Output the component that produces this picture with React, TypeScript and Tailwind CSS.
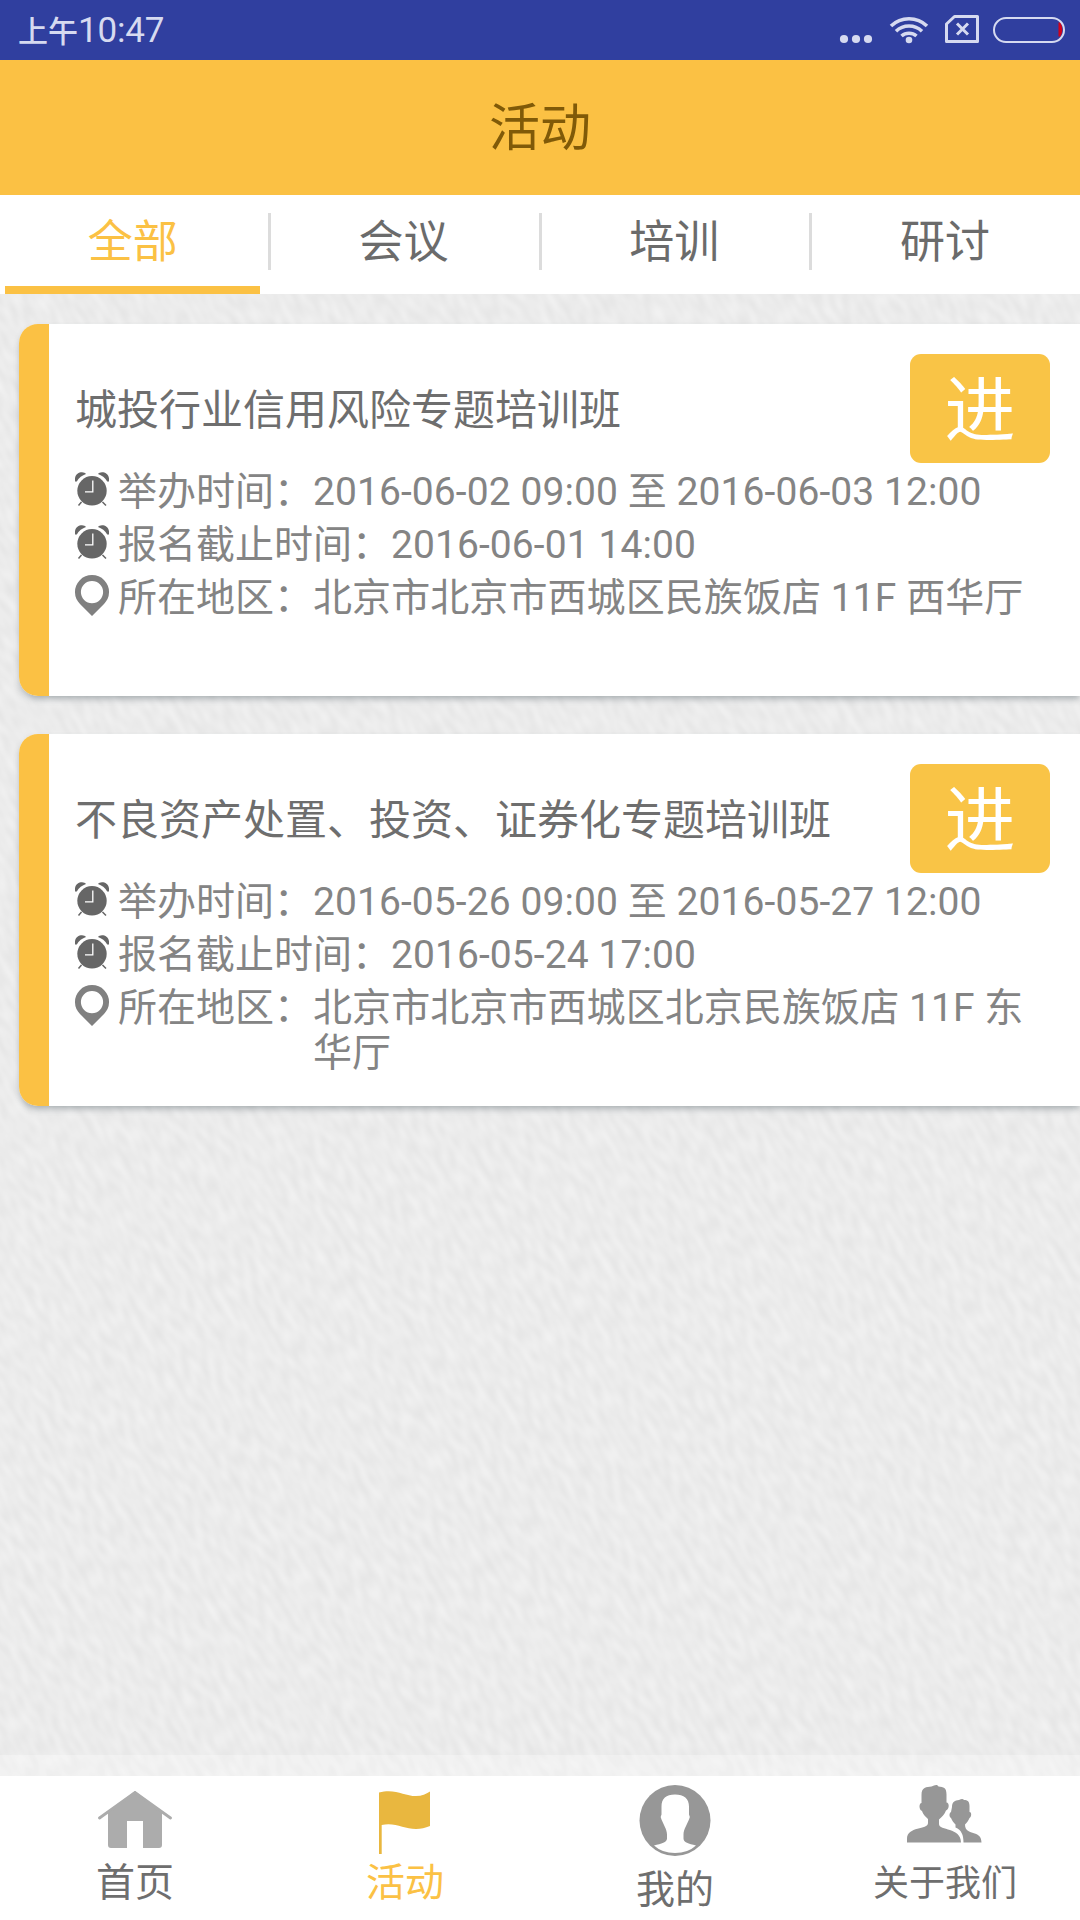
import React from "react";

const tabs = ["全部", "会议", "培训", "研讨"];

const events = [
  {
    title: "城投行业信用风险专题培训班",
    time: "2016-06-02 09:00 至 2016-06-03 12:00",
    deadline: "2016-06-01 14:00",
    place: "北京市北京市西城区民族饭店 11F 西华厅",
  },
  {
    title: "不良资产处置、投资、证券化专题培训班",
    time: "2016-05-26 09:00 至 2016-05-27 12:00",
    deadline: "2016-05-24 17:00",
    place: "北京市北京市西城区北京民族饭店 11F 东华厅",
  },
];

function Clock() {
  return (
    <svg className="mt-[9px] h-[36px] w-[34px] shrink-0" viewBox="0 0 34 36" fill="#666">
      <path d="M0 9.500C-.8 3 3 .3 7 .3c1.800 0 3.300.7 4 1.800C7.500 3.200 3.500 6 1.800 9.600Z" />
      <path d="M34 9.500C34.800 3 31 .3 27 .3c-1.800 0-3.300.7-4 1.800 3.500 1.100 7.500 3.900 9.200 7.500Z" />
      <circle cx="17" cy="18.800" r="14.700" />
      <path d="M6.500 30 3.500 33.500M27.500 30l3.500 3.500" stroke="#666" strokeWidth="1.500" />
      <path d="M17.800 8.500v11.300H10" stroke="#fff" strokeWidth="1.300" fill="none" />
    </svg>
  );
}

function Pin() {
  return (
    <svg className="mt-[6px] h-[41px] w-[34px] shrink-0" viewBox="0 0 34 41" fill="#808080">
      <path
        fillRule="evenodd"
        d="M17 0a17 17 0 0 1 17 17.500c0 4.800-2.200 8.500-5 11.500L17 41 5 29c-2.800-3-5-6.700-5-11.500A17 17 0 0 1 17 0Zm0 6a11 11 0 1 0 0 22.200A11 11 0 0 0 17 6Z"
      />
    </svg>
  );
}

function Row({ icon, label, value }: { icon: React.ReactNode; label: string; value: string }) {
  return (
    <div className="flex min-h-[53px] text-[39px] leading-[45px] text-[#848484]">
      {icon}
      <span className="ml-[9px] shrink-0 pt-[7px]">{label}</span>
      <span className="w-[722px] pt-[7px] tracking-[0.08px]">{value}</span>
    </div>
  );
}

function EventCard({ event }: { event: (typeof events)[number] }) {
  return (
    <article className="ml-[19px] flex h-[372px] rounded-l-[19px] bg-white shadow-[0_4px_6px_-1px_rgba(90,105,110,0.45)]">
      <div className="w-[30px] shrink-0 rounded-l-[19px] bg-[#fbc144]" />
      <div className="flex min-w-0 grow flex-col pl-[26px] pr-[30px] pt-[30px]">
        <div className="flex h-[109px] shrink-0 justify-between">
          <h2 className="pt-[27px] text-[42px] leading-[60px] text-[#6e6e6e]">{event.title}</h2>
          <button className="h-[109px] w-[140px] rounded-[11px] bg-[#f9c446] pt-[5px] text-[71px] leading-[104px] text-white">
            进
          </button>
        </div>
        <div>
          <Row icon={<Clock />} label="举办时间：" value={event.time} />
          <Row icon={<Clock />} label="报名截止时间：" value={event.deadline} />
          <Row icon={<Pin />} label="所在地区：" value={event.place} />
        </div>
      </div>
    </article>
  );
}

function Texture() {
  return (
    <svg className="absolute inset-0 h-full w-full" aria-hidden="true">
      <filter id="weave" x="0" y="0" width="100%" height="100%" colorInterpolationFilters="sRGB">
        <feTurbulence type="fractalNoise" baseFrequency="0.14 0.06" numOctaves="1" seed="4" />
        <feColorMatrix values="0.07 0 0 0 0.888  0.07 0 0 0 0.888  0.07 0 0 0 0.888  0 0 0 0 1" />
      </filter>
      <g transform="rotate(-30 540 740)">
        <rect x="-700" y="-600" width="2480" height="2680" filter="url(#weave)" />
      </g>
    </svg>
  );
}

function StatusBar() {
  return (
    <div className="flex h-[60px] items-center justify-between bg-[#303f9f] pl-[18px] pr-[15px] text-[#d6daf0]">
      <div className="flex items-baseline pt-[2px]">
        <span className="text-[30px] font-medium leading-[60px]">上午</span>
        <span className="text-[35px] leading-[60px] tracking-[-0.2px]">10:47</span>
      </div>
      <svg className="h-[60px] w-[226px]" viewBox="839 0 226 60" fill="none" stroke="#d6daf0">
        <g fill="#d6daf0" stroke="none">
          <circle cx="844" cy="39" r="4.100" />
          <circle cx="856" cy="39" r="4.100" />
          <circle cx="868" cy="39" r="4.100" />
          <circle cx="909" cy="40" r="3.300" />
        </g>
        <g strokeWidth="3.600">
          <path d="M891 26a26 26 0 0 1 36 0" />
          <path d="M896 31.200a19 19 0 0 1 26 0" />
          <path d="M901.500 36a11.500 11.500 0 0 1 15 0" />
        </g>
        <path d="M954.500 16.500H977.500V41.500H946.500V24Z" strokeWidth="3" strokeLinejoin="round" />
        <path d="m957 23.500 11 11m0-11-11 11" strokeWidth="3" />
        <path d="M1058.500 22.500h2q3.500 7 0 14h-2Z" fill="#d0021b" stroke="none" />
        <rect x="994" y="18" width="70" height="24" rx="12" strokeWidth="2" />
      </svg>
    </div>
  );
}

function HomeIcon() {
  return (
    <svg className="h-[60px] w-[74px]" viewBox="0 0 74 60" fill="#acacac">
      <path d="M37 0 10 21v33q0 3 3 3h16V30h16v27h16q3 0 3-3V21Z" />
      <path d="M1.500 27 37 1.500 72.500 27" fill="none" stroke="#acacac" strokeWidth="2.800" strokeLinecap="round" />
    </svg>
  );
}

function FlagIcon() {
  return (
    <svg className="h-[66px] w-[52px]" viewBox="0 0 52 66" fill="#e9b73f">
      <path d="M0 1.500C16-3 25 5 37 5c6 0 10-2 14-4.500V35C46 37 42 38 37 38 25 38 16 31 2.700 34V63H0Z" />
    </svg>
  );
}

function ProfileIcon() {
  return (
    <svg className="mr-px h-[72px] w-[72px]" viewBox="0 0 72 72">
      <circle cx="36" cy="36.500" r="35.500" fill="#979797" />
      <path
        d="M36 10.500c9 0 14 4 14 12v8q1.500 2 0 5c-1.500 4-5.500 10-5.500 15v4c0 4 5 5 12.500 7q-8 7.500-21 7.500T15 61.500c7.500-2 13-3 13-7v-4c0-5-4-11-5.500-15q-1.500-3 0-5v-8c0-8 4.500-12 13.500-12Z"
        fill="#fff"
      />
    </svg>
  );
}

function PeopleIcon() {
  return (
    <svg className="mr-px h-[60px] w-[75px]" viewBox="0 0 75 60" fill="#979797">
      <path d="M14.500 11c0-8 5-8 10-8.500 3-1 5-3 7 0 5 .5 8 1 8 8v8c3 0 3 6.500-.5 8-1.500 4-4 6.500-7 9V40c0 7 22 3 22 18.500H0v-3.500c0-13 21-9 21-16v-4c-3-2.500-5-5-6-8-3.500-1.500-3-8-.5-8Z" />
      <path d="M45 23c0-5.500 3-6.500 7-7 2.500-1.500 4-1.500 5 0 3.500 0 5.500 1.500 5.500 6v6c2.500 0 2 5 0 6-1 2.500-2.500 4.500-4.500 6.500 0 12 16.500 4.500 16.500 18H56.500c0-7.500-2-12.500-8-15v-3c-2-2-3.500-4-4.500-6.500-2-1-2-5 0-6Z" />
    </svg>
  );
}

function BottomNav() {
  return (
    <nav className="relative grid h-[144px] grid-cols-4 bg-white text-[39px] leading-[48px] text-[#6e6e6e]">
      <div className="flex flex-col items-center pt-[15px]">
        <HomeIcon />
        <span className="mt-[8px]">首页</span>
      </div>
      <div className="flex flex-col items-center pt-[15px] text-[#fbc144]">
        <FlagIcon />
        <span className="mt-[2px]">活动</span>
      </div>
      <div className="flex flex-col items-center pt-[8px]">
        <ProfileIcon />
        <span className="mt-[10px]">我的</span>
      </div>
      <div className="flex flex-col items-center pt-[8px]">
        <PeopleIcon />
        <span className="mt-[16px] text-[36px]">关于我们</span>
      </div>
    </nav>
  );
}

export default function App() {
  return (
    <div className="flex h-[1920px] w-[1080px] flex-col overflow-hidden bg-white font-[Roboto,'Noto_Sans_CJK_SC',sans-serif]">
      <StatusBar />
      <header className="h-[135px] bg-[#fbc144] pt-[3px] text-center text-[51px] leading-[132px] text-[#805a08]">活动</header>
      <div className="flex h-[99px] bg-white text-[45px] text-[#6b6b6b]">
        {tabs.map((tab, i) => (
          <React.Fragment key={tab}>
            {i > 0 && <div className="mt-[18px] h-[57px] w-[3px] shrink-0 bg-[#dcdcdc]" />}
            <div className="flex flex-1 flex-col justify-between pl-[5px] pr-[7px]">
              <span
                className={
                  i === 0
                    ? "pt-[5px] text-center leading-[86px] text-[#fbc144]"
                    : "pt-[5px] text-center leading-[86px]"
                }
              >
                {tab}
              </span>
              {i === 0 && <div className="h-2 w-[255px] shrink-0 bg-[#fbc144]" />}
            </div>
          </React.Fragment>
        ))}
      </div>
      <main className="relative flex grow flex-col overflow-hidden bg-[#ebebeb]">
        <Texture />
        <div className="relative flex grow flex-col gap-[38px] pt-[30px]">
          {events.map((event) => (
            <EventCard key={event.title} event={event} />
          ))}
        </div>
        <div className="relative h-[21px] bg-white/30" />
      </main>
      <BottomNav />
    </div>
  );
}
